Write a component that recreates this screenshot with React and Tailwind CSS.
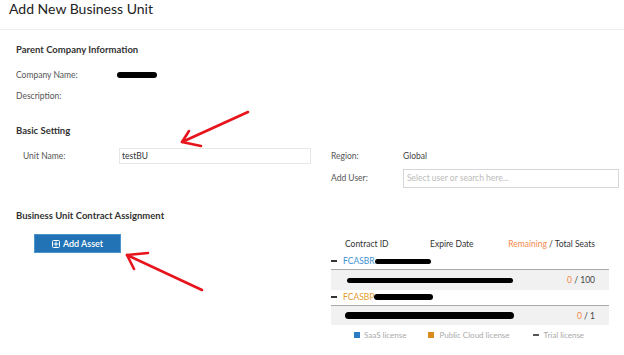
import React from 'react';

const Blob = ({ className = '' }) => (
  <span className={`inline-block rounded-full bg-black ${className}`} />
);

const Arrows = () => (
  <svg className="pointer-events-none absolute inset-0" width="624" height="355" viewBox="0 0 624 355">
    <g stroke="#e8141b" strokeWidth="2.6" strokeLinecap="round" strokeLinejoin="round" fill="none">
      <path d="M248 112 L182 142" />
      <path d="M189 131 L182 142 L201 146" />
      <path d="M202 290 L127 255" />
      <path d="M148 253 L127 255 L134 269" />
    </g>
  </svg>
);

const App = () => {
  return (
    <div className="relative h-[355px] w-[624px] overflow-hidden bg-white font-['Lato',sans-serif] text-[#444]">
      <header className="h-[30px] border-b border-[#ececec] pl-[9px]">
        <h1 className="text-[14px] leading-[18px] text-[#222]">Add New Business Unit</h1>
      </header>

      <div className="pl-[16px]">
        <h2 className="mt-[13px] text-[9.5px] font-bold leading-[14px] text-[#333]">Parent Company Information</h2>
        <div className="mt-[12px] flex h-[12px] items-center text-[8.5px] leading-[12px] text-[#555]">
          <span className="w-[101px]">Company Name:</span>
          <Blob className="h-[6px] w-[40px]" />
        </div>
        <div className="mt-[9px] h-[12px] text-[8.5px] leading-[12px] text-[#555]">Description:</div>

        <h2 className="mt-[22px] text-[9.5px] font-bold leading-[14px] text-[#333]">Basic Setting</h2>
        <div className="mt-[10px] flex">
          <div className="flex h-[16px] w-[295px] items-center">
            <span className="w-[103px] pl-[7px] text-[8.5px] text-[#555]">Unit Name:</span>
            <div className="flex h-[16px] flex-1 items-center border border-[#e6e6e6] pl-[2px] text-[8.5px] text-[#333]">testBU</div>
          </div>
          <div className="ml-[20px] w-[288px]">
            <div className="flex h-[16px] items-center text-[8.5px]">
              <span className="w-[72px] text-[#555]">Region:</span>
              <span className="text-[#444]">Global</span>
            </div>
            <div className="mt-[5px] flex h-[19px] items-center text-[8.5px]">
              <span className="w-[72px] text-[#555]">Add User:</span>
              <div className="flex h-[19px] flex-1 items-center border border-[#d6d6d6] pl-[3px] text-[#bbb]">Select user or search here...</div>
            </div>
          </div>
        </div>

        <h2 className="mt-[21px] text-[9.5px] font-bold leading-[14px] text-[#333]">Business Unit Contract Assignment</h2>

        <div className="mt-[11px] flex">
          <div className="w-[315px]">
            <button className="ml-[18px] flex h-[19px] w-[87px] items-center justify-center gap-[3px] border border-[#4c93cc] bg-[#2273b5] text-[9px] font-semibold text-white">
              <svg width="8" height="8" viewBox="0 0 8 8" fill="none" stroke="white" strokeWidth="1">
                <rect x="0.5" y="0.5" width="7" height="7" rx="1" />
                <path d="M4 1.5 V6.5 M1.5 4 H6.5" />
              </svg>
              Add Asset
            </button>
          </div>

          <div className="w-[278px] pt-[4px] text-[8.5px] leading-[12px]">
            <div className="flex h-[12px] text-[#333]">
              <span className="w-[99px] pl-[14px]">Contract ID</span>
              <span>Expire Date</span>
              <span className="ml-auto pr-[14px]">
                <span className="text-[#f5894a]">Remaining</span> / Total Seats
              </span>
            </div>

            <div className="mt-[5px] flex h-[12px] items-center">
              <span className="h-[2px] w-[6px] bg-[#333]" />
              <span className="ml-[6px] text-[#3d8fd3]">FCASBR</span>
              <Blob className="h-[5px] w-[56px]" />
            </div>
            <div className="mt-[2px] flex h-[21px] items-center border-t border-[#aaa] bg-[#f1f1f1] pl-[16px] pr-[14px]">
              <Blob className="h-[5px] w-[166px]" />
              <span className="ml-auto text-[#444]">
                <span className="text-[#f5894a]">0</span> / 100
              </span>
            </div>

            <div className="flex h-[13px] items-center">
              <span className="h-[2px] w-[6px] bg-[#333]" />
              <span className="ml-[6px] text-[#e49a2c]">FCASBP</span>
              <Blob className="h-[6px] w-[59px]" />
            </div>
            <div className="mt-[2px] flex h-[20px] items-center border-t border-[#aaa] bg-[#f1f1f1] pl-[14px] pr-[14px]">
              <Blob className="h-[7px] w-[169px]" />
              <span className="ml-auto text-[#444]">
                <span className="text-[#f5894a]">0</span> / 1
              </span>
            </div>

            <div className="mt-[4px] flex h-[12px] items-center pl-[23px] text-[8px] text-[#aaa]">
              <span className="h-[6px] w-[6px] bg-[#2b7cc2]" />
              <span className="ml-[4px]">SaaS license</span>
              <span className="ml-[22px] h-[6px] w-[6px] bg-[#d98b1c]" />
              <span className="ml-[5px]">Public Cloud license</span>
              <span className="ml-[23px] h-[1.5px] w-[6px] bg-[#555]" />
              <span className="ml-[5px]">Trial license</span>
            </div>
          </div>
        </div>
      </div>

      <Arrows />
    </div>
  );
};

export default App;
